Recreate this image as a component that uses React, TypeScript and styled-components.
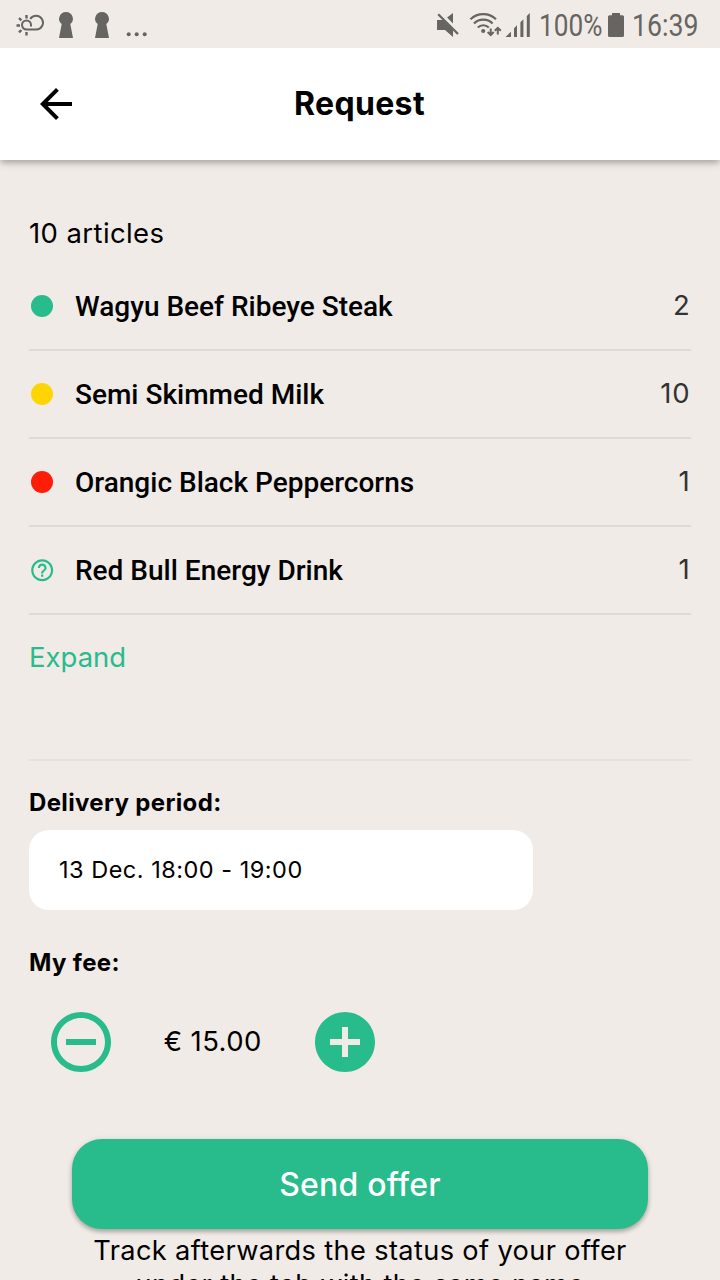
import React from 'react';
import styled, { createGlobalStyle } from 'styled-components';

const GREEN = '#28bb8c';
const SAND = '#f0ebe7';
const STATUS = '#666562';

const GlobalStyle = createGlobalStyle`
  * { box-sizing: border-box; }
  body { margin: 0; background: ${SAND}; }
  button { border: 0; padding: 0; margin: 0; background: none; font: inherit; color: inherit; cursor: pointer; }
  svg { display: block; flex: none; }
`;

const Screen = styled.div`
  width: 720px;
  height: 1280px;
  overflow: hidden;
  display: flex;
  flex-direction: column;
  background: ${SAND};
  color: #000;
  font-family: Inter, "Liberation Sans", sans-serif;
`;

const StatusBar = styled.div`
  flex: none;
  height: 48px;
  display: flex;
  justify-content: space-between;
  color: ${STATUS};
`;

const StatusText = styled.div<{ $width: number; $gap: number; $scale: number }>`
  width: ${p => p.$width}px;
  margin-left: ${p => p.$gap}px;
  font: 400 31px/52px Roboto, sans-serif;
  white-space: nowrap;
  & > span { display: inline-block; transform-origin: 0 50%; transform: scaleX(${p => p.$scale}); }
`;

const StatusGroup = styled.div`
  display: flex;
  align-items: flex-start;
`;

const AppBar = styled.header`
  flex: none;
  height: 112px;
  padding: 0 33px 0 32px;
  display: grid;
  grid-template-columns: 48px 1fr 48px;
  align-items: center;
  background: #fff;
  z-index: 1;
  clip-path: inset(0 0 -24px 0);
  box-shadow: 0 4px 5px -1px rgba(0, 0, 0, 0.18), 0 2px 10px rgba(0, 0, 0, 0.16);
`;

const Title = styled.h1`
  margin: 0;
  text-align: center;
  font-size: 32px;
  font-weight: 700;
  line-height: 40px;
  letter-spacing: 0.35px;
`;

const Content = styled.main`
  flex: none;
  padding: 53px 29px 0;
  display: flex;
  flex-direction: column;
`;

const Count = styled.p`
  margin: 0 0 10px;
  height: 40px;
  line-height: 40px;
  font-size: 27.5px;
  font-weight: 400;
  letter-spacing: 0.4px;
`;

const Row = styled.div`
  height: 88px;
  display: flex;
  align-items: center;
  border-bottom: 2px solid #dcdbda;
`;

const Marker = styled.div`
  width: 26px;
  margin-right: 20px;
  display: flex;
  justify-content: center;
`;

const Dot = styled.span<{ $color: string }>`
  width: 22px;
  height: 22px;
  border-radius: 50%;
  background: ${p => p.$color};
`;

const Name = styled.span`
  flex: 1;
  padding-top: 2px;
  font: 500 28px/36px Roboto, sans-serif;
`;

const Quantity = styled.span`
  padding: 0 0.5px 3px 0;
  font-size: 27.5px;
  font-weight: 400;
  line-height: 36px;
  letter-spacing: 0.8px;
  color: #333;
`;

const Expand = styled.button`
  && {
    align-self: flex-start;
    margin-top: 22px;
    height: 40px;
    font-size: 27.5px;
    font-weight: 400;
    line-height: 41px;
    letter-spacing: 0;
    color: ${GREEN};
  }
`;

const Divider = styled.hr`
  width: 100%;
  height: 2px;
  margin: 82px 0 26px;
  border: 0;
  background: #e4e2df;
`;

const Label = styled.div`
  height: 32px;
  font-size: 24px;
  font-weight: 650;
  line-height: 32px;
  letter-spacing: 0.35px;
`;

const Period = styled.div`
  width: 504px;
  height: 80px;
  margin: 11px 0 37px;
  padding-left: 30px;
  border-radius: 20px;
  background: #fff;
  font-size: 23.5px;
  font-weight: 400;
  line-height: 80px;
  letter-spacing: 0.5px;
`;

const Stepper = styled.div`
  margin: 27px 0 0 15.7px;
  display: flex;
  align-items: center;
`;

const Fee = styled.div`
  width: 192px;
  text-align: center;
  padding-bottom: 2px;
  font-size: 27.5px;
  font-weight: 400;
  line-height: 40px;
  letter-spacing: 0.4px;
`;

const Footer = styled.footer`
  flex: none;
  display: flex;
  flex-direction: column;
  align-items: center;
  margin-top: 61px;
`;

const SendButton = styled.button`
  && {
    width: 576px;
    height: 90px;
    border-radius: 30px;
    background: ${GREEN};
    color: #fff;
    font-size: 32px;
    font-weight: 500;
    line-height: 92px;
    letter-spacing: 0.2px;
    box-shadow: 0 3px 4px rgba(0, 0, 0, 0.24), 0 1px 6px rgba(0, 0, 0, 0.1);
  }
`;

const Note = styled.p`
  margin: 5px 0 0;
  text-align: center;
  font-size: 27.2px;
  font-weight: 400;
  line-height: 34px;
  letter-spacing: 0.36px;
`;

const items = [
  { name: 'Wagyu Beef Ribeye Steak', qty: 2, color: GREEN },
  { name: 'Semi Skimmed Milk', qty: 10, color: '#fed403' },
  { name: 'Orangic Black Peppercorns', qty: 1, color: '#fd1d08' },
  { name: 'Red Bull Energy Drink', qty: 1 },
];

const Notifications = () => (
  <svg width="160" height="48" viewBox="0 0 160 48" fill={STATUS}>
    <g fill="none" stroke={STATUS} strokeWidth="2">
      <path d="M31 26.5v-1.5a4.5 4.5 0 1 0-4.5 4.5H36.3a6.9 6.9 0 1 0-6.1-10.5" />
      <path d="M26.5 15v3.5M26.5 32v3.5M16.5 25.5H20M19 18l2.4 2.4M19 32.4l2.4-2.4" strokeWidth="2.4" />
    </g>
    <path d="M66 12a6.8 6.8 0 0 1 4.3 12.1L73 38H59l2.7-13.9A6.8 6.8 0 0 1 66 12z" />
    <path d="M102 12a6.8 6.8 0 0 1 4.3 12.1L109 38H95l2.7-13.9A6.8 6.8 0 0 1 102 12z" />
    <circle cx="128.7" cy="34.3" r="2" />
    <circle cx="136.7" cy="34.3" r="2" />
    <circle cx="144.7" cy="34.3" r="2" />
  </svg>
);

const Signals = () => (
  <svg width="102" height="48" viewBox="432 0 102 48" fill={STATUS}>
    <path d="M437 20h6.2L453 29.8V37l-8-7h-8z" />
    <path d="M453 13v10.5l-5.9-5.9z" />
    <path d="M438.2 14.2L458 34" stroke={STATUS} strokeWidth="2.3" />
    <g fill="none" stroke={STATUS} strokeWidth="2.2">
      <path d="M470.5 19.3a18.5 18.5 0 0 1 25.5 0" />
      <path d="M474 23.5a13.3 13.3 0 0 1 18.6 0" />
      <path d="M477.8 27.5a7.8 7.8 0 0 1 11 0" />
      <path d="M490.7 28.5v6.3M487.7 32l3 3 3-3M497.8 34.5v-6.3M494.8 30.8l3-3 3 3" strokeWidth="2" />
    </g>
    <circle cx="483.2" cy="31" r="2.1" />
    <path d="M505.5 37l5.5-5.3V37zM514 28.3l3-3V37h-3zM520.4 22.2l3-3V37h-3zM526.8 16l3-3v24h-3z" />
  </svg>
);

const Battery = () => (
  <svg width="16" height="48" viewBox="0 0 16 48" fill={STATUS}>
    <path d="M4 13h8v2.2h2.5A1.5 1.5 0 0 1 16 16.7V35.5A1.5 1.5 0 0 1 14.5 37h-13A1.5 1.5 0 0 1 0 35.5V16.7A1.5 1.5 0 0 1 1.5 15.2H4z" />
  </svg>
);

const Icon = ({ size, d, color = GREEN }: { size: number; d: string; color?: string }) => (
  <svg width={size} height={size} viewBox="0 0 24 24" fill={color}>
    <path d={d} />
  </svg>
);

const BACK = 'M20 11H7.83l5.59-5.59L12 4l-8 8 8 8 1.41-1.41L7.83 13H20v-2z';
const HELP = 'M11 18h2v-2h-2v2zm1-16C6.48 2 2 6.48 2 12s4.48 10 10 10 10-4.48 10-10S17.52 2 12 2zm0 18c-4.41 0-8-3.59-8-8s3.59-8 8-8 8 3.59 8 8-3.59 8-8 8zm0-14c-2.21 0-4 1.79-4 4h2c0-1.1.9-2 2-2s2 .9 2 2c0 2-3 1.75-3 5h2c0-2.25 3-2.5 3-5 0-2.21-1.79-4-4-4z';
const MINUS = 'M7 11v2h10v-2H7zm5-9C6.48 2 2 6.48 2 12s4.48 10 10 10 10-4.48 10-10S17.52 2 12 2zm0 18c-4.41 0-8-3.59-8-8s3.59-8 8-8 8 3.59 8 8-3.59 8-8 8z';
const PLUS = 'M12 2C6.48 2 2 6.48 2 12s4.48 10 10 10 10-4.48 10-10S17.52 2 12 2zm5 11h-4v4h-2v-4H7v-2h4V7h2v4h4v2z';

export default function App() {
  return (
    <Screen>
      <GlobalStyle />
      <StatusBar>
        <Notifications />
        <StatusGroup>
          <Signals />
          <StatusText $width={69} $gap={5} $scale={0.845}><span>100%</span></StatusText>
          <Battery />
          <StatusText $width={88} $gap={8} $scale={0.86}><span>16:39</span></StatusText>
        </StatusGroup>
      </StatusBar>
      <AppBar>
        <button aria-label="Back"><Icon size={48} d={BACK} color="#000" /></button>
        <Title>Request</Title>
      </AppBar>
      <Content>
        <Count>10 articles</Count>
        {items.map(item => (
          <Row key={item.name}>
            <Marker>
              {item.color ? <Dot $color={item.color} /> : <Icon size={26.4} d={HELP} />}
            </Marker>
            <Name>{item.name}</Name>
            <Quantity>{item.qty}</Quantity>
          </Row>
        ))}
        <Expand>Expand</Expand>
        <Divider />
        <Label>Delivery period:</Label>
        <Period>13 Dec. 18:00 - 19:00</Period>
        <Label>My fee:</Label>
        <Stepper>
          <button aria-label="Decrease fee"><Icon size={72} d={MINUS} /></button>
          <Fee>€ 15.00</Fee>
          <button aria-label="Increase fee"><Icon size={72} d={PLUS} /></button>
        </Stepper>
      </Content>
      <Footer>
        <SendButton>Send offer</SendButton>
        <Note>
          Track afterwards the status of your offer
          <br />
          under the tab with the same name
        </Note>
      </Footer>
    </Screen>
  );
}
